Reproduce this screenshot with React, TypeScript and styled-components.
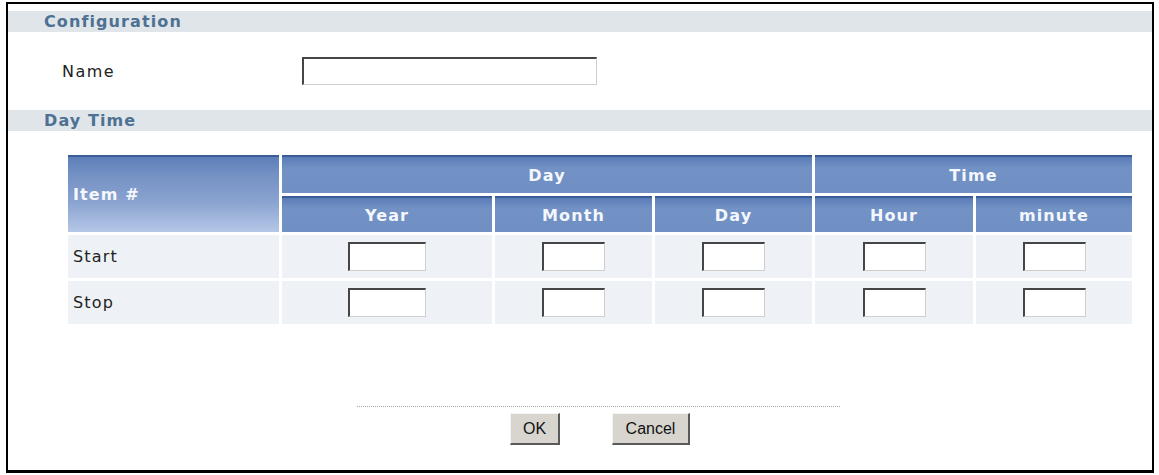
import React from "react";
import styled, { createGlobalStyle } from "styled-components";

const Global = createGlobalStyle`
  html, body { margin: 0; padding: 0; background: #ffffff; }
  body { font-family: "DejaVu Sans", Verdana, sans-serif; }
`;

const Frame = styled.div`
  box-sizing: border-box;
  width: 1148px;
  height: 471px;
  margin: 2px 0 0 6px;
  border: 2px solid #000;
  border-bottom-width: 3px;
  background: #fff;
  padding-top: 7px;
`;

const SectionBar = styled.div`
  height: 21px;
  background: #dfe5e9;
  display: flex;
  align-items: center;
  padding-left: 36px;
  font-size: 16px;
  font-weight: bold;
  letter-spacing: 1.1px;
  color: #4e7193;
`;

const FieldRow = styled.div`
  height: 78px;
  display: flex;
  align-items: center;
  padding-left: 54px;
`;

const Label = styled.span`
  width: 240px;
  font-size: 16px;
  letter-spacing: 1.5px;
  color: #222;
`;

const TextBox = styled.input<{ $w: number; $h: number }>`
  box-sizing: border-box;
  width: ${(p) => p.$w}px;
  height: ${(p) => p.$h}px;
  margin: 0;
  padding: 0 3px;
  background: #fff;
  border-style: solid;
  border-width: 2px 1px 1px 2px;
  border-color: #454545 #cfcfcf #cfcfcf #454545;
  outline: none;
  font-family: "DejaVu Sans", sans-serif;
  font-size: 14px;
`;

const Grid = styled.table`
  table-layout: fixed;
  border-collapse: separate;
  border-spacing: 3px;
  width: 1070px;
  margin: 21px 0 0 57px;
`;

const HeadCell = styled.th<{ $align?: string; $tall?: boolean }>`
  padding: 0;
  padding-left: ${(p) => (p.$align === "left" ? "5px" : "0")};
  text-align: ${(p) => p.$align || "center"};
  font-size: 16px;
  font-weight: bold;
  letter-spacing: 1.1px;
  color: #f4f7fc;
  border-top: 2px solid #3a5c98;
  background: ${(p) =>
    p.$tall
      ? "linear-gradient(#5d7fb8 0%, #7592c5 25%, #8aa3d0 60%, #b4c7e7 100%)"
      : "linear-gradient(#5a7cb6 0%, #7291c5 30%, #7090c4 100%)"};
`;

const HeadRow = styled.tr<{ $h: number }>`
  height: ${(p) => p.$h}px;
`;

const DataRow = styled.tr`
  height: 43px;
`;

const DataCell = styled.td<{ $label?: boolean }>`
  background: #eef2f6;
  padding: 0 0 0 ${(p) => (p.$label ? "5px" : "0")};
  text-align: ${(p) => (p.$label ? "left" : "center")};
  font-size: 16px;
  letter-spacing: 1.2px;
  color: #222;
  vertical-align: middle;
`;

const CellBox = styled(TextBox)`
  display: block;
  margin: 0 auto;
`;

const Footer = styled.div`
  margin: 79px 0 0 349px;
  width: 483px;
`;

const Dotted = styled.div`
  border-top: 1px dotted #a8a8a8;
  height: 0;
`;

const ButtonRow = styled.div`
  display: flex;
  gap: 52px;
  padding-left: 153px;
  margin-top: 6px;
`;

const Button = styled.button<{ $w: number }>`
  box-sizing: border-box;
  width: ${(p) => p.$w}px;
  height: 32px;
  margin: 0;
  padding: 0;
  background: #d8d5cf;
  border-style: solid;
  border-width: 1px 2px 2px 1px;
  border-color: #f4f4f4 #5a5a5a #5a5a5a #f4f4f4;
  font-family: "Liberation Sans", Arial, sans-serif;
  font-size: 16px;
  color: #111;
`;

const cols = [211, 210, 157, 157, 158, 156];
const boxWidths = [78, 63, 63, 63, 63];
const rows = ["Start", "Stop"];

export default function App() {
  return (
    <>
      <Global />
      <Frame>
        <SectionBar>Configuration</SectionBar>
        <FieldRow>
          <Label>Name</Label>
          <TextBox $w={295} $h={28} />
        </FieldRow>
        <SectionBar>Day Time</SectionBar>
        <Grid>
          <colgroup>
            {cols.map((w, i) => (
              <col key={i} style={{ width: w }} />
            ))}
          </colgroup>
          <thead>
            <HeadRow $h={38}>
              <HeadCell rowSpan={2} $align="left" $tall>
                Item #
              </HeadCell>
              <HeadCell colSpan={3}>Day</HeadCell>
              <HeadCell colSpan={2}>Time</HeadCell>
            </HeadRow>
            <HeadRow $h={36}>
              <HeadCell>Year</HeadCell>
              <HeadCell>Month</HeadCell>
              <HeadCell>Day</HeadCell>
              <HeadCell>Hour</HeadCell>
              <HeadCell>minute</HeadCell>
            </HeadRow>
          </thead>
          <tbody>
            {rows.map((r) => (
              <DataRow key={r}>
                <DataCell $label>{r}</DataCell>
                {boxWidths.map((w, i) => (
                  <DataCell key={i}>
                    <CellBox $w={w} $h={29} />
                  </DataCell>
                ))}
              </DataRow>
            ))}
          </tbody>
        </Grid>
        <Footer>
          <Dotted />
          <ButtonRow>
            <Button $w={50}>OK</Button>
            <Button $w={78}>Cancel</Button>
          </ButtonRow>
        </Footer>
      </Frame>
    </>
  );
}
